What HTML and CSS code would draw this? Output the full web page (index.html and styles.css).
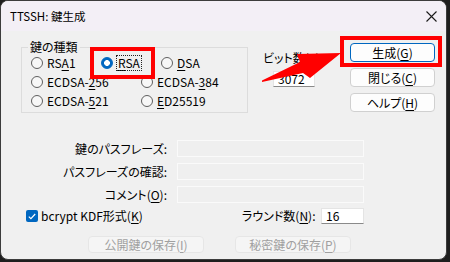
FILE: index.html
```html
<!DOCTYPE html>
<html lang="ja">
<head>
    <meta charset="UTF-8">
    <title>TTSSH: 鍵生成</title>
    <link rel="stylesheet" href="styles.css">
</head>
<body>
    <div class="screen">
        <div class="window">
            <div class="titlebar">
                <span class="title">TTSSH: 鍵生成</span>
                <svg class="close" width="11" height="11" viewBox="0 0 11 11">
                    <path d="M0.5 0.5 L10.5 10.5 M10.5 0.5 L0.5 10.5" stroke="#1a1a1a" stroke-width="1.1" fill="none"/>
                </svg>
            </div>

            <div class="content">
                <div class="top">
                    <div class="group">
                        <span class="group-title">鍵の種類</span>
                        <div class="radio-row">
                            <span class="radio w70"><span class="dot"></span><span>RS<u>A</u>1</span></span>
                            <span class="radio w60"><span class="dot on"></span><span class="focus"><u>R</u>SA</span></span>
                            <span class="radio"><span class="dot"></span><span><u>D</u>SA</span></span>
                        </div>
                        <div class="radio-row">
                            <span class="radio w110"><span class="dot"></span><span>ECDSA-<u>2</u>56</span></span>
                            <span class="radio"><span class="dot"></span><span>ECDSA-<u>3</u>84</span></span>
                        </div>
                        <div class="radio-row">
                            <span class="radio w110"><span class="dot"></span><span>ECDSA-<u>5</u>21</span></span>
                            <span class="radio"><span class="dot"></span><span><u>E</u>D25519</span></span>
                        </div>
                    </div>

                    <div class="bits">
                        <div class="bits-label">ビット数(<u>E</u>):</div>
                        <div class="edit bits-input">3072</div>
                    </div>

                    <div class="buttons">
                        <div class="btn default"><span>生成(<u>G</u>)</span></div>
                        <div class="btn"><span>閉じる(<u>C</u>)</span></div>
                        <div class="btn"><span>ヘルプ(<u>H</u>)</span></div>
                    </div>
                </div>

                <div class="form">
                    <span class="form-label">鍵のパスフレーズ:</span>
                    <span class="edit disabled"></span>
                    <span class="form-label">パスフレーズの確認:</span>
                    <span class="edit disabled"></span>
                    <span class="form-label">コメント(<u>O</u>):</span>
                    <span class="edit disabled"></span>
                </div>

                <div class="option-row">
                    <span class="check-item">
                        <span class="checkbox">
                            <svg width="8" height="7" viewBox="0 0 8 7">
                                <path d="M0.8 3.6 L2.9 5.6 L7.2 1" stroke="#fff" stroke-width="1.2" fill="none"/>
                            </svg>
                        </span>
                        <span>bcrypt KDF形式(<u>K</u>)</span>
                    </span>
                    <span class="round-label">ラウンド数(<u>N</u>):</span>
                    <span class="edit round-input">16</span>
                </div>

                <div class="save-row">
                    <div class="btn off"><span>公開鍵の保存(<u>I</u>)</span></div>
                    <div class="btn off"><span>秘密鍵の保存(<u>P</u>)</span></div>
                </div>
            </div>
        </div>

        <div class="mark mark-rsa"></div>
        <div class="mark mark-gen"></div>
        <svg class="arrow" width="450" height="262" viewBox="0 0 450 262">
            <polygon points="341,53 297,54 300,62 262,80.5 262,82 303,73 310,78" fill="#ff0000"/>
        </svg>
    </div>
</body>
</html>
```

FILE: styles.css
```css
body {
    margin: 0;
    background: #1e1e1e;
    font-family: "Noto Sans CJK JP", "Liberation Sans", sans-serif;
    font-size: 12px;
    line-height: 14px;
    color: #000;
    font-feature-settings: "palt";
}

.screen {
    position: relative;
    width: 450px;
    height: 262px;
}

.window {
    width: 447px;
    height: 260px;
    box-sizing: border-box;
    border: 1px solid #3c3c3c;
    border-radius: 8px;
    background: #f0f0f0;
    overflow: hidden;
}

.titlebar {
    height: 30px;
    background: #f3eff6;
    display: flex;
    align-items: center;
    justify-content: space-between;
    padding: 0 8px 0 9px;
}

.title {
    font-size: 11.5px;
}

.close {
    margin-right: 1px;
}

.content {
    padding-left: 20px;
}

u {
    text-decoration-thickness: 1px;
    text-underline-offset: 2px;
}

/* haut : type de clé, bits, boutons */
.top {
    display: flex;
    align-items: flex-start;
}

.group {
    position: relative;
    margin-top: 16px;
    width: 227px;
    height: 66px;
    box-sizing: border-box;
    border: 1px solid #dcdcdc;
    padding: 6px 0 0 9px;
    display: flex;
    flex-direction: column;
    gap: 1px;
}

.group-title {
    position: absolute;
    top: -8px;
    left: 6px;
    padding: 0 2px;
    background: #f0f0f0;
}

.radio-row {
    display: flex;
    height: 18px;
    align-items: center;
}

.radio {
    display: flex;
    align-items: center;
    gap: 4px;
}

.w60 { width: 60px; }
.w70 { width: 70px; }
.w110 { width: 110px; }

.dot {
    width: 12px;
    height: 12px;
    box-sizing: border-box;
    border: 1px solid #5f5f5f;
    border-radius: 50%;
    background: #f7f7f7;
}

.dot.on {
    border-color: #0067c0;
    background: radial-gradient(circle, #fff 0 2.6px, #0067c0 3.2px);
}

.focus {
    outline: 1px dotted #222;
    outline-offset: 0;
    padding: 0 1px;
}

.bits {
    margin-left: 15px;
    width: 87px;
    padding-top: 20px;
}

.bits-input {
    margin: 6px 0 0 10px;
    width: 42px;
    height: 16px;
}

.buttons {
    margin-top: 12px;
    width: 85px;
    display: flex;
    flex-direction: column;
    gap: 6px;
}

.btn {
    height: 19px;
    box-sizing: border-box;
    border: 1px solid #d0d0d0;
    border-radius: 4px;
    background: #fdfdfd;
    display: flex;
    align-items: center;
    justify-content: center;
}

.btn.default {
    border-color: #0067c0;
}

.btn.off {
    width: 116px;
    height: 17px;
    background: #f5f5f5;
    border-color: #e6e6e6;
    color: #a0a0a0;
}

/* champs */
.edit {
    display: flex;
    align-items: center;
    box-sizing: border-box;
    padding-left: 4px;
    background: #fff;
    border: 1px solid #e4e4e4;
    border-bottom-color: #8a8a8a;
}

.edit.disabled {
    background: #efefef;
    border: 1px solid #fafafa;
    height: 17px;
}

.form {
    margin-top: 27px;
    display: grid;
    grid-template-columns: 146px 187px;
    column-gap: 10px;
    row-gap: 6px;
}

.form-label {
    text-align: right;
    line-height: 17px;
}

.option-row {
    margin-top: 5px;
    height: 16px;
    display: flex;
    align-items: center;
}

.check-item {
    width: 216px;
    margin-left: 5px;
    display: flex;
    align-items: center;
    gap: 3px;
}

.checkbox {
    width: 12px;
    height: 12px;
    border-radius: 2px;
    background: #0067c0;
    display: flex;
    align-items: center;
    justify-content: center;
}

.round-label {
    width: 79px;
}

.round-input {
    width: 43px;
    height: 16px;
}

.save-row {
    margin: 12px 0 0 67px;
    display: flex;
    gap: 31px;
}

/* annotations rouges */
.mark {
    position: absolute;
    box-sizing: border-box;
    border: 4px solid #ff0000;
}

.mark-rsa {
    left: 90px;
    top: 47px;
    width: 65px;
    height: 32px;
}

.mark-gen {
    left: 340px;
    top: 36px;
    width: 102px;
    height: 31px;
}

.arrow {
    position: absolute;
    left: 0;
    top: 0;
    pointer-events: none;
}
```
